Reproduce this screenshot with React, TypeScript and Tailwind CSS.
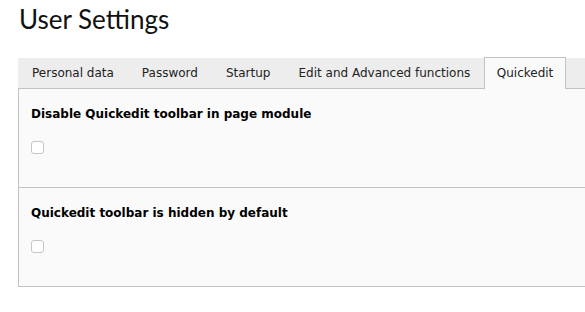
import React from "react";

const tabs = ["Personal data", "Password", "Startup", "Edit and Advanced functions"];

function Section({ label }: { label: string }) {
  return (
    <div className="h-[99px] border-b border-[#c3c3c3] pl-[12px] pt-[16px]">
      <div className="text-[12px] leading-[18px] font-bold text-black">{label}</div>
      <div className="mt-[18px] w-[13px] h-[13px] rounded-[3px] border border-[#c6c6c6] bg-white"></div>
    </div>
  );
}

export default function App() {
  return (
    <div
      className="w-[585px] h-[312px] overflow-hidden bg-white"
      style={{ fontFamily: '"DejaVu Sans", Verdana, sans-serif' }}
    >
      <h1
        className="pl-[19px] pt-[4px] text-[26px] leading-[31px] text-[#111] font-normal"
        style={{ fontFamily: 'Lato, "Open Sans", sans-serif' }}
      >
        User Settings
      </h1>
      <div className="ml-[18px] w-[600px] mt-[23px]">
        <div className="flex h-[31px] bg-[#ededed] border-b border-[#c3c3c3] text-[12px] text-[#222]">
          {tabs.map((t) => (
            <div key={t} className="px-[14px] leading-[31px] whitespace-nowrap">
              {t}
            </div>
          ))}
          <div className="-mt-px -mb-px h-[32px] px-[11.5px] leading-[31px] bg-[#fafafa] border-t border-x border-[#c3c3c3] whitespace-nowrap">
            Quickedit
          </div>
        </div>
        <div className="bg-[#fafafa] border-l border-[#c3c3c3]">
          <Section label="Disable Quickedit toolbar in page module" />
          <Section label="Quickedit toolbar is hidden by default" />
        </div>
      </div>
    </div>
  );
}
